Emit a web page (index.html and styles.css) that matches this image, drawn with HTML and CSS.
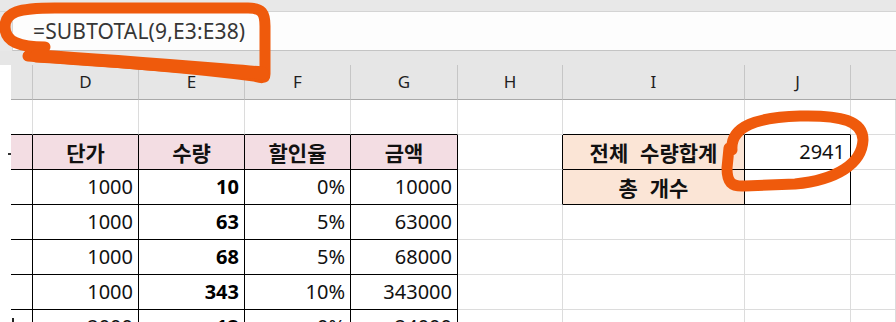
FILE: index.html
```html
<!DOCTYPE html>
<html lang="ko">
<head>
<meta charset="utf-8">
<title>SUBTOTAL</title>
<link rel="stylesheet" href="styles.css">
</head>
<body>
<div class="sheet">
  <div class="topband"></div>
  <div class="fbar-row"><div class="fbar">=SUBTOTAL(9,E3:E38)</div></div>
  <div class="colheads">
    <div class="grid hdr">
      <div class="h strip"></div>
      <div class="h"></div>
      <div class="h">D</div>
      <div class="h">E</div>
      <div class="h">F</div>
      <div class="h">G</div>
      <div class="h">H</div>
      <div class="h">I</div>
      <div class="h">J</div>
      <div class="h last"></div>
    </div>
  </div>
  <div class="grid body">
    <!-- row 1 -->
    <div class="strip"></div>
    <div class="c tb"></div>
    <div class="c tb"></div>
    <div class="c tb"></div>
    <div class="c tb"></div>
    <div class="c tb"></div>
    <div class="c"></div>
    <div class="c tb"></div>
    <div class="c tb"></div>
    <div class="c"></div>
    <!-- row 2 -->
    <div class="strip"><span class="frag-dash"></span></div>
    <div class="c t pink"></div>
    <div class="c t pink lbl">단가</div>
    <div class="c t pink lbl">수량</div>
    <div class="c t pink lbl">할인율</div>
    <div class="c t pink lbl">금액</div>
    <div class="c tr"></div>
    <div class="c t peach lbl wide">전체 수량합계</div>
    <div class="c t num">2941</div>
    <div class="c"></div>
    <!-- row 3 -->
    <div class="strip"></div>
    <div class="c t"></div>
    <div class="c t num">1000</div>
    <div class="c t num b">10</div>
    <div class="c t num">0%</div>
    <div class="c t num">10000</div>
    <div class="c tr"></div>
    <div class="c t peach lbl wide">총 개수</div>
    <div class="c t"></div>
    <div class="c"></div>
    <!-- row 4 -->
    <div class="strip"></div>
    <div class="c t"></div>
    <div class="c t num">1000</div>
    <div class="c t num b">63</div>
    <div class="c t num">5%</div>
    <div class="c t num">63000</div>
    <div class="c"></div>
    <div class="c"></div>
    <div class="c"></div>
    <div class="c"></div>
    <!-- row 5 -->
    <div class="strip"></div>
    <div class="c t"></div>
    <div class="c t num">1000</div>
    <div class="c t num b">68</div>
    <div class="c t num">5%</div>
    <div class="c t num">68000</div>
    <div class="c"></div>
    <div class="c"></div>
    <div class="c"></div>
    <div class="c"></div>
    <!-- row 6 -->
    <div class="strip"></div>
    <div class="c t"></div>
    <div class="c t num">1000</div>
    <div class="c t num b">343</div>
    <div class="c t num">10%</div>
    <div class="c t num">343000</div>
    <div class="c"></div>
    <div class="c"></div>
    <div class="c"></div>
    <div class="c"></div>
    <!-- row 7 -->
    <div class="strip"></div>
    <div class="c t"><span class="frag-bar"></span></div>
    <div class="c t num">2000</div>
    <div class="c t num b">12</div>
    <div class="c t num">0%</div>
    <div class="c t num">24000</div>
    <div class="c"></div>
    <div class="c"></div>
    <div class="c"></div>
    <div class="c"></div>
  </div>
  <svg class="marks" width="896" height="322" viewBox="0 0 896 322">
    <path d="M 45 47 C 20 47, 5 42, 5 27 C 5 12, 18 8, 55 8 L 248 8 C 262 8, 265 13, 265 26 L 265 74 C 265 79, 261 78, 254 76 C 200 69, 120 62, 28 56" />
    <path class="thick" d="M 262 73 C 200 68, 120 61, 36 56" />
    <path d="M 732 150 C 730 126, 758 117, 800 116 C 842 115, 863 121, 863 140 C 862 164, 836 180, 795 184 L 745 186 C 731 187, 727 182, 727 168 L 729 148" />
  </svg>
</div>
</body>
</html>
```
FILE: styles.css
```css
* {
  box-sizing: border-box;
  margin: 0;
  padding: 0;
}

html, body {
  width: 896px;
  height: 322px;
  overflow: hidden;
  background: #ffffff;
}

body {
  font-family: "Noto Sans", "Noto Sans CJK KR", sans-serif;
  color: #111111;
}

.sheet {
  position: relative;
  width: 896px;
  height: 322px;
  overflow: hidden;
}

.topband {
  height: 12px;
  background: #e8e8e8;
  border-bottom: 1px solid #d4d4d4;
}

.fbar-row {
  height: 39px;
  background: #e8e8e8;
  padding-left: 12px;
}

.fbar {
  height: 39px;
  background: #fdfdfd;
  border-left: 1px solid #d6d6d6;
  border-bottom: 1px solid #c4c4c4;
  padding-left: 20px;
  font-size: 21px;
  letter-spacing: 0.15px;
  line-height: 38px;
  color: #363636;
  white-space: nowrap;
}

.colheads {
  height: 49px;
  background: #e6e6e6;
  padding-top: 14px;
}

.grid {
  display: grid;
  grid-template-columns: 11px 22px 106px 106px 106px 107px 105px 182px 106px 45px;
}

.hdr {
  grid-auto-rows: 35px;
}

.h {
  border-right: 1px solid #c6c6c6;
  border-bottom: 1px solid #a9a9a9;
  text-align: center;
  font-size: 17px;
  line-height: 34px;
  color: #1f1f1f;
}

.h.strip {
  border-right: none;
  border-bottom: none;
}

.h.last {
  border-right: none;
}

.body {
  grid-auto-rows: 35px;
}

.strip {
  background: #ffffff;
}

.c {
  border-right: 1px solid #dcdcdc;
  border-bottom: 1px solid #dcdcdc;
  font-size: 20px;
  line-height: 34px;
  white-space: nowrap;
  overflow: hidden;
}

.c.tb {
  border-bottom-color: #000000;
}

.c.tr {
  border-right-color: #000000;
}

.c.t {
  border-right-color: #000000;
  border-bottom-color: #000000;
}

.pink {
  background: #f3dde3;
}

.peach {
  background: #fbe5d6;
}

.num {
  text-align: right;
  padding-right: 5px;
  color: #111111;
}

.b {
  font-weight: 700;
  color: #000000;
}

.lbl {
  text-align: center;
  font-family: "Noto Sans CJK KR", "Noto Sans", sans-serif;
  font-weight: 700;
  font-size: 21px;
  color: #111111;
}

.wide {
  word-spacing: 6px;
}

.frag-dash {
  display: block;
  width: 3px;
  height: 2px;
  margin-top: 18px;
  margin-left: 8px;
  background: #333333;
}

.frag-bar {
  display: block;
  width: 2px;
  height: 14px;
  margin-top: 8px;
  margin-left: 1px;
  background: #222222;
}

.marks {
  position: absolute;
  left: 0;
  top: 0;
  pointer-events: none;
}

.marks path {
  fill: none;
  stroke: #ef5a0c;
  stroke-width: 11;
  stroke-linecap: round;
  stroke-linejoin: round;
}

.marks path.thick {
  stroke-width: 13;
}
```
